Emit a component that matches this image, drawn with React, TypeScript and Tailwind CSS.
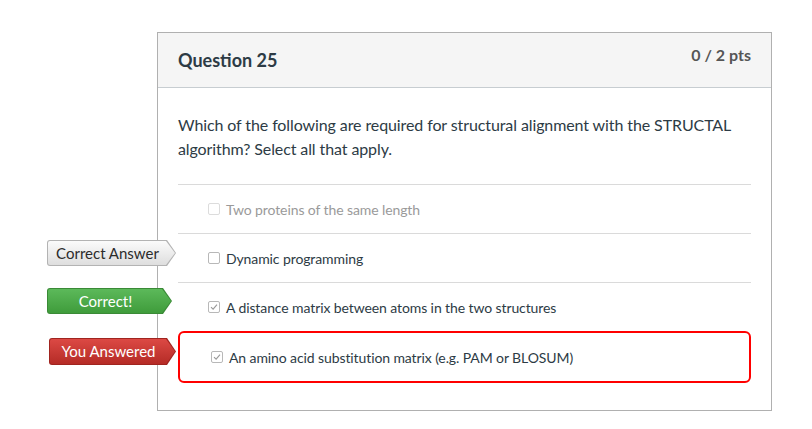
const arrowClip =
  "[clip-path:polygon(0_0,calc(100%-9px)_0,100%_50%,calc(100%-9px)_100%,0_100%)]";

type Tag = "correct-answer" | "correct" | "you-answered";

const answers: {
  text: string;
  checked: boolean;
  muted?: boolean;
  tag?: Tag;
  selected?: boolean;
}[] = [
  { text: "Two proteins of the same length", checked: false, muted: true },
  { text: "Dynamic programming", checked: false, tag: "correct-answer" },
  { text: "A distance matrix between atoms in the two structures", checked: true, tag: "correct" },
  {
    text: "An amino acid substitution matrix (e.g. PAM or BLOSUM)",
    checked: true,
    tag: "you-answered",
    selected: true,
  },
];

function Label({ tag }: { tag: Tag }) {
  if (tag === "correct-answer") {
    return (
      <div className={`absolute -left-[131px] top-[6px] h-[26px] w-[129px] rounded-l-[3px] bg-[#b3b3b3] ${arrowClip}`}>
        <div
          className={`absolute inset-[1px] rounded-l-[2px] bg-gradient-to-b from-[#fbfbfb] to-[#dedede] flex items-center justify-center pr-[8px] text-[15px] text-[#2b2b2b] ${arrowClip}`}
        >
          Correct Answer
        </div>
      </div>
    );
  }
  if (tag === "correct") {
    return (
      <div className={`absolute -left-[131px] top-[5px] h-[26px] w-[125px] rounded-l-[3px] bg-[#3a8a36] ${arrowClip}`}>
        <div
          className={`absolute inset-[1px] rounded-l-[2px] bg-gradient-to-b from-[#5cb95a] to-[#3f9c3b] flex items-center justify-center pr-[8px] text-[15px] text-white ${arrowClip}`}
        >
          Correct!
        </div>
      </div>
    );
  }
  return (
    <div className={`absolute -left-[131px] top-[5px] h-[27px] w-[127px] rounded-l-[3px] bg-[#a0241f] ${arrowClip}`}>
      <div
        className={`absolute inset-[1px] rounded-l-[2px] bg-gradient-to-b from-[#dc4944] to-[#b52b26] flex items-center justify-center pr-[8px] text-[15px] text-white ${arrowClip}`}
      >
        You Answered
      </div>
    </div>
  );
}

function Checkbox({ checked, muted }: { checked: boolean; muted?: boolean }) {
  return (
    <span
      className={`flex h-[12px] w-[12px] items-center justify-center rounded-[2px] border bg-white ${
        muted ? "border-[#dcdcdc]" : "border-[#b8b8b8]"
      }`}
    >
      {checked && (
        <svg width="8" height="8" viewBox="0 0 8 8">
          <path d="M1 4.2 L3.1 6.2 L7 1.6" fill="none" stroke="#999" strokeWidth="1.1" />
        </svg>
      )}
    </span>
  );
}

export default function App() {
  return (
    <div className="min-h-[429px] w-[812px] bg-white pl-[157px] pt-[32px] font-['Lato','Liberation_Sans',sans-serif] text-[#2d3b45]">
      <div className="w-[615px] border border-[#b0b0b0]">
        {/* header */}
        <div className="flex h-[55px] items-center justify-between border-b border-[#c7cdd1] bg-[#f5f5f5] px-5">
          <h2 className="text-[18px] font-bold leading-6 text-[#2d3b45]">Question 25</h2>
          <span className="self-start pt-[12px] text-[16px] font-bold leading-5 text-[#555]">0 / 2 pts</span>
        </div>

        {/* body */}
        <div className="px-5 pb-[27px] pt-[25px]">
          <p className="text-[16px] leading-6 tracking-[-0.1px]">
            Which of the following are required for structural alignment with the STRUCTAL algorithm? Select all
            that apply.
          </p>

          <div className="mt-[23px]">
            {answers.map((a) =>
              a.selected ? (
                <div
                  key={a.text}
                  className="relative flex h-[52px] items-center rounded-[6px] border-2 border-[#ff0000] pl-[31px]"
                >
                  {a.tag && <Label tag={a.tag} />}
                  <Checkbox checked={a.checked} />
                  <span className="ml-[6px] text-[14px] tracking-[-0.1px]">{a.text}</span>
                </div>
              ) : (
                <div
                  key={a.text}
                  className="relative flex h-[49px] items-center border-t border-[#dadada] pl-[30px]"
                >
                  {a.tag && <Label tag={a.tag} />}
                  <Checkbox checked={a.checked} muted={a.muted} />
                  <span className={`ml-[6px] text-[14px] tracking-[-0.1px] ${a.muted ? "text-[#9a9a9a]" : ""}`}>
                    {a.text}
                  </span>
                </div>
              )
            )}
          </div>
        </div>
      </div>
    </div>
  );
}
